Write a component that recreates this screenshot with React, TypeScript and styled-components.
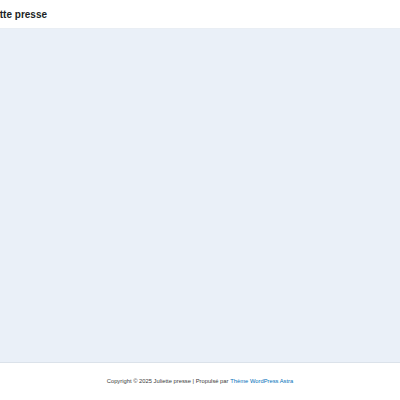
import styled, { createGlobalStyle } from 'styled-components';

const GlobalStyle = createGlobalStyle`
  html, body {
    margin: 0;
    padding: 0;
    background: #ffffff;
    font-family: 'Liberation Sans', Arial, sans-serif;
    overflow: hidden;
  }
`;

const Page = styled.div`
  width: 400px;
  height: 400px;
  display: flex;
  flex-direction: column;
  overflow: hidden;
`;

const Header = styled.header`
  height: 28px;
  flex-shrink: 0;
  display: flex;
  align-items: center;
  border-bottom: 1px solid #e9eef4;
  background: #fff;
`;

const SiteTitle = styled.a`
  margin-left: -23px;
  font-size: 10px;
  font-weight: 700;
  color: #1c1f26;
  text-decoration: none;
  white-space: nowrap;
`;

const Main = styled.main`
  height: 333px;
  flex-shrink: 0;
  background: #eaf0f8;
  border-bottom: 1px solid #dbe2ea;
`;

const Footer = styled.footer`
  flex: 1;
  display: flex;
  align-items: center;
  justify-content: center;
  font-size: 5.8px;
  color: #3a3a3a;
  padding-bottom: 2px;
`;

const FooterLink = styled.a`
  color: #0170b9;
  text-decoration: none;
  margin-left: 0.3em;
`;

export default function App() {
  return (
    <>
      <GlobalStyle />
      <Page>
        <Header>
          <SiteTitle href="#">Juliette presse</SiteTitle>
        </Header>
        <Main />
        <Footer>
          Copyright © 2025 Juliette presse | Propulsé par
          <FooterLink href="#">Thème WordPress Astra</FooterLink>
        </Footer>
      </Page>
    </>
  );
}
